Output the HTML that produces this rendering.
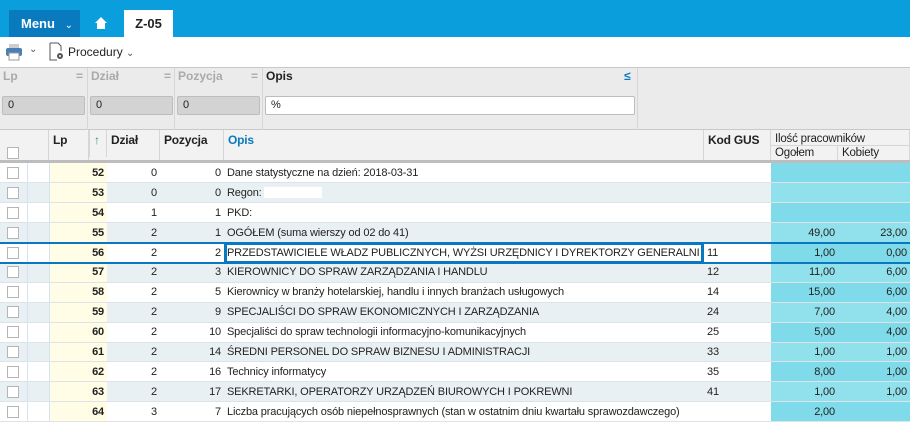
<!DOCTYPE html>
<html><head><meta charset="utf-8"><style>
*{box-sizing:border-box;margin:0;padding:0}
body{width:910px;height:422px;overflow:hidden;font-family:"Liberation Sans",Arial,sans-serif;font-size:12px;color:#222;background:#fff;position:relative}
.abs{position:absolute}
.top{left:0;top:0;width:910px;height:37px;background:#0a9fdc}
.menu{left:9px;top:10px;width:71px;height:27px;background:#0a7abf;color:#fff;font-weight:bold;font-size:13px;line-height:27px;padding-left:12px}
.tab{left:124px;top:10px;width:49px;height:27px;background:#fff;font-weight:bold;font-size:13px;line-height:27px;text-align:center}
.filt{left:0;top:67px;width:910px;height:63px;background:#ebebeb;border-top:1px solid #c8c8c8;border-bottom:1px solid #c8c8c8}
.fl{top:69px;font-weight:bold;color:#aaa;font-size:12px}
.fin{top:96px;height:19px;background:#d3d3d3;border:1px solid #bdbdbd;border-radius:2px;padding-left:5px;line-height:17px;font-size:11px}
.vsep{top:68px;width:1px;height:62px;background:#d6d6d6}
.hdr{left:0;top:130px;width:910px;background:#f2f2f2;border-bottom:3px solid #bdbdbd;height:33px}
.hc{top:130px;height:30px;border-right:1px solid #d6d6d6;font-weight:bold;font-size:12px;padding:3px 0 0 4px;letter-spacing:-0.2px}
table{position:absolute;left:0;top:163px;border-collapse:collapse;table-layout:fixed;width:910px}
td{height:19.9px;border-bottom:1px solid #dde3e6;padding:0 3px;white-space:nowrap;overflow:hidden;font-size:11px;letter-spacing:-0.15px}
tr:nth-child(even) td{background:#e9f0f3}
td.cb{width:27px;padding-left:7px}
td.e{width:22px;border-right:1px solid #d2e4f4;border-left:1px solid #d2e4f4}
td.lp{width:58px;text-align:right;font-weight:bold;background:#fffde5!important}
td.r{text-align:right}
td.d{width:53px}td.p{width:64px}td.o{width:480px}td.k{width:67px}
td.c1{width:67px;background:#7fdbe9!important;text-align:right}
td.c2{background:#7fdbe9!important;text-align:right}
tr:nth-child(even) td.c1,tr:nth-child(even) td.c2{background:#91e1ec!important}
.box{display:inline-block;width:12px;height:12px;border:1px solid #b5b5b5;background:#fff;vertical-align:middle}
</style></head><body>
<div class="abs top"></div>
<div class="abs menu">Menu <span style="font-weight:normal;font-size:10px;margin-left:6px">&#8964;</span></div>
<svg class="abs" style="left:94px;top:16px" width="14" height="14" viewBox="0 0 14 14"><path d="M7 1 L1 7 H3 V13 H11 V7 H13 Z" fill="#fff"/></svg>
<div class="abs tab">Z-05</div>
<svg class="abs" style="left:5px;top:43px" width="18" height="18" viewBox="0 0 18 18"><rect x="4" y="1" width="10" height="5" fill="#ccc"/><rect x="1" y="5" width="16" height="8" rx="2" fill="#4a7fb5"/><rect x="4" y="10" width="10" height="7" fill="#fff" stroke="#999"/></svg>
<div class="abs" style="left:29px;top:44px;font-size:10px;color:#555">&#8964;</div>
<svg class="abs" style="left:48px;top:42px" width="18" height="20" viewBox="0 0 18 20"><path d="M2 1 H10 L13 4 V9 M9 18 H2 V1" fill="none" stroke="#555"/><circle cx="12" cy="14" r="3" fill="#555"/><circle cx="12" cy="14" r="1" fill="#fff"/></svg>
<div class="abs" style="left:68px;top:45px;font-size:12px">Procedury <span style="font-size:10px;color:#555">&#8964;</span></div>
<div class="abs filt"></div>
<div class="abs fl" style="left:3px">Lp</div><div class="abs fl" style="left:76px">=</div>
<div class="abs fl" style="left:91px">Dział</div><div class="abs fl" style="left:164px">=</div>
<div class="abs fl" style="left:178px">Pozycja</div><div class="abs fl" style="left:251px">=</div>
<div class="abs fl" style="left:266px;color:#222">Opis</div><div class="abs fl" style="left:624px;color:#0a7abf">≤</div>
<div class="abs vsep" style="left:87px"></div><div class="abs vsep" style="left:174px"></div><div class="abs vsep" style="left:262px"></div><div class="abs vsep" style="left:637px"></div>
<div class="abs fin" style="left:2px;width:83px">0</div>
<div class="abs fin" style="left:90px;width:83px">0</div>
<div class="abs fin" style="left:177px;width:83px">0</div>
<div class="abs fin" style="left:265px;width:370px;background:#fff">%</div>
<div class="abs hdr"></div>
<div class="abs hc" style="left:0;width:49px;padding-top:15px;padding-left:7px"><span class="box"></span></div>
<div class="abs hc" style="left:49px;width:40px">Lp</div>
<div class="abs hc" style="left:89px;width:18px;color:#3a9a5a;border-left:1px solid #d6d6d6;height:27px">↑</div>
<div class="abs hc" style="left:107px;width:53px">Dział</div>
<div class="abs hc" style="left:160px;width:64px">Pozycja</div>
<div class="abs hc" style="left:224px;width:480px;color:#0a7abf">Opis</div>
<div class="abs hc" style="left:704px;width:67px">Kod GUS</div>
<div class="abs hc" style="left:771px;width:139px;height:16px;border-bottom:1px solid #d6d6d6;font-weight:normal;font-size:11.5px">Ilość pracowników</div>
<div class="abs hc" style="left:771px;top:146px;height:14px;width:67px;padding-top:1px;font-weight:normal;font-size:11.5px">Ogołem</div>
<div class="abs hc" style="left:838px;top:146px;height:14px;width:72px;padding-top:1px;font-weight:normal;font-size:11.5px">Kobiety</div>
<table>
<tr><td class="cb"><span class="box"></span></td><td class="e"></td><td class="lp">52</td><td class="d r">0</td><td class="p r">0</td><td class="o">Dane statystyczne na dzień: 2018-03-31</td><td class="k"></td><td class="c1"></td><td class="c2"></td></tr>
<tr><td class="cb"><span class="box"></span></td><td class="e"></td><td class="lp">53</td><td class="d r">0</td><td class="p r">0</td><td class="o">Regon: <span style="display:inline-block;width:58px;height:11px;background:#fff;vertical-align:middle"></span></td><td class="k"></td><td class="c1"></td><td class="c2"></td></tr>
<tr><td class="cb"><span class="box"></span></td><td class="e"></td><td class="lp">54</td><td class="d r">1</td><td class="p r">1</td><td class="o">PKD:</td><td class="k"></td><td class="c1"></td><td class="c2"></td></tr>
<tr><td class="cb"><span class="box"></span></td><td class="e"></td><td class="lp">55</td><td class="d r">2</td><td class="p r">1</td><td class="o">OGÓŁEM (suma wierszy od 02 do 41)</td><td class="k"></td><td class="c1">49,00</td><td class="c2">23,00</td></tr>
<tr><td class="cb"><span class="box"></span></td><td class="e"></td><td class="lp">56</td><td class="d r">2</td><td class="p r">2</td><td class="o">PRZEDSTAWICIELE WŁADZ PUBLICZNYCH, WYŻSI URZĘDNICY I DYREKTORZY GENERALNI</td><td class="k">11</td><td class="c1">1,00</td><td class="c2">0,00</td></tr>
<tr><td class="cb"><span class="box"></span></td><td class="e"></td><td class="lp">57</td><td class="d r">2</td><td class="p r">3</td><td class="o">KIEROWNICY DO SPRAW ZARZĄDZANIA I HANDLU</td><td class="k">12</td><td class="c1">11,00</td><td class="c2">6,00</td></tr>
<tr><td class="cb"><span class="box"></span></td><td class="e"></td><td class="lp">58</td><td class="d r">2</td><td class="p r">5</td><td class="o">Kierownicy w branży hotelarskiej, handlu i innych branżach usługowych</td><td class="k">14</td><td class="c1">15,00</td><td class="c2">6,00</td></tr>
<tr><td class="cb"><span class="box"></span></td><td class="e"></td><td class="lp">59</td><td class="d r">2</td><td class="p r">9</td><td class="o">SPECJALIŚCI DO SPRAW EKONOMICZNYCH I ZARZĄDZANIA</td><td class="k">24</td><td class="c1">7,00</td><td class="c2">4,00</td></tr>
<tr><td class="cb"><span class="box"></span></td><td class="e"></td><td class="lp">60</td><td class="d r">2</td><td class="p r">10</td><td class="o">Specjaliści do spraw technologii informacyjno-komunikacyjnych</td><td class="k">25</td><td class="c1">5,00</td><td class="c2">4,00</td></tr>
<tr><td class="cb"><span class="box"></span></td><td class="e"></td><td class="lp">61</td><td class="d r">2</td><td class="p r">14</td><td class="o">ŚREDNI PERSONEL DO SPRAW BIZNESU I ADMINISTRACJI</td><td class="k">33</td><td class="c1">1,00</td><td class="c2">1,00</td></tr>
<tr><td class="cb"><span class="box"></span></td><td class="e"></td><td class="lp">62</td><td class="d r">2</td><td class="p r">16</td><td class="o">Technicy informatycy</td><td class="k">35</td><td class="c1">8,00</td><td class="c2">1,00</td></tr>
<tr><td class="cb"><span class="box"></span></td><td class="e"></td><td class="lp">63</td><td class="d r">2</td><td class="p r">17</td><td class="o">SEKRETARKI, OPERATORZY URZĄDZEŃ BIUROWYCH I POKREWNI</td><td class="k">41</td><td class="c1">1,00</td><td class="c2">1,00</td></tr>
<tr><td class="cb"><span class="box"></span></td><td class="e"></td><td class="lp">64</td><td class="d r">3</td><td class="p r">7</td><td class="o">Liczba pracujących osób niepełnosprawnych (stan w ostatnim dniu kwartału sprawozdawczego)</td><td class="k"></td><td class="c1">2,00</td><td class="c2"></td></tr>
</table>
<div class="abs" style="left:0;top:242px;width:910px;height:22px;border-top:2px solid #0a78c0;border-bottom:2px solid #0a78c0"></div>
<div class="abs" style="left:224px;top:242px;width:480px;height:22px;border:3px solid #0a78c0"></div>
</body></html>
